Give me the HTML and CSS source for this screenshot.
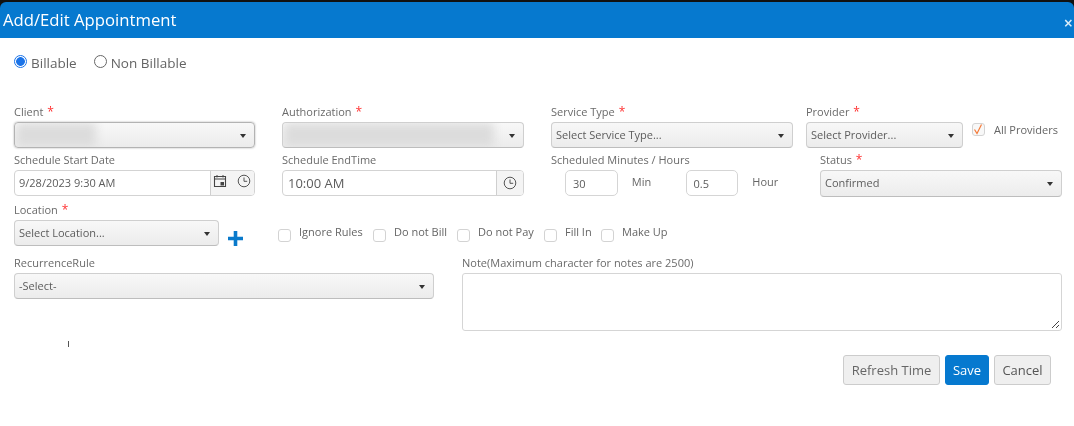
FILE: index.html
```html
<!DOCTYPE html>
<html lang="en">
<head>
<meta charset="utf-8">
<title>Add/Edit Appointment</title>
<link rel="stylesheet" href="styles.css">
</head>
<body>
<div class="soft">
<div class="top">
  <header class="title-bar">
    <h1>Add/Edit Appointment</h1>
    <span class="close">×</span>
  </header>
</div>
<main class="form">
  <div class="radios">
    <label class="radio"><span class="dot on"></span>Billable</label>
    <label class="radio"><span class="dot"></span>Non Billable</label>
  </div>

  <div class="row row-1">
    <div class="field w-client">
      <div class="lab">Client <i>*</i></div>
      <div class="select focus"><span class="blur b-client"></span><b class="caret"></b></div>
    </div>
    <div class="field w-auth">
      <div class="lab">Authorization <i>*</i></div>
      <div class="select"><span class="blur b-auth"></span><b class="caret"></b></div>
    </div>
    <div class="field w-svc">
      <div class="lab">Service Type <i>*</i></div>
      <div class="select"><span>Select Service Type...</span><b class="caret"></b></div>
    </div>
    <div class="field w-prov">
      <div class="lab">Provider <i>*</i></div>
      <div class="select"><span>Select Provider...</span><b class="caret"></b></div>
    </div>
    <div class="all">
      <span class="check checked"><svg viewBox="0 0 12 12" width="12" height="12"><path d="M2.500 6.500 5 10.500 9.500 1.500" fill="none" stroke="#f47b3a" stroke-width="1.200"/></svg></span>
      <span class="all-text">All Providers</span>
    </div>
  </div>

  <div class="row row-2">
    <div class="field w-client">
      <div class="lab">Schedule Start Date</div>
      <div class="input-group">
        <span class="value">9/28/2023 9:30 AM</span>
        <span class="addon two">
          <svg viewBox="0 0 14 14" width="14" height="14"><path d="M1.500 2.500h11v10h-11zM1.500 5h11" fill="none" stroke="#444" stroke-width="1.100"/><path d="M4 1v2.500M10 1v2.500" stroke="#444"/><rect x="7.500" y="8" width="3.500" height="3.500" fill="#444"/></svg>
          <svg viewBox="0 0 14 14" width="14" height="14"><circle cx="7" cy="7" r="5.800" fill="none" stroke="#555"/><path d="M7 3.500V7.300h3.200" fill="none" stroke="#555"/></svg>
        </span>
      </div>
    </div>
    <div class="field w-auth">
      <div class="lab">Schedule EndTime</div>
      <div class="input-group">
        <span class="value big">10:00 AM</span>
        <span class="addon one">
          <svg viewBox="0 0 14 14" width="14" height="14"><circle cx="7" cy="7" r="5.800" fill="none" stroke="#555"/><path d="M7 3.500V7.300h3.200" fill="none" stroke="#555"/></svg>
        </span>
      </div>
    </div>
    <div class="field w-mins">
      <div class="lab">Scheduled Minutes / Hours</div>
      <div class="mins">
        <span class="num">30</span><span class="unit u-min">Min</span>
        <span class="num">0.5</span><span class="unit">Hour</span>
      </div>
    </div>
    <div class="field w-status">
      <div class="lab">Status <i>*</i></div>
      <div class="select tall"><span>Confirmed</span><b class="caret"></b></div>
    </div>
  </div>

  <div class="row row-3">
    <div class="field w-loc">
      <div class="lab">Location <i>*</i></div>
      <div class="select"><span>Select Location...</span><b class="caret"></b></div>
    </div>
    <svg class="plus" viewBox="0 0 15 15" width="15" height="15"><path d="M7.500 0v15M0 7.500h15" stroke="#0a7acb" stroke-width="3.600"/></svg>
    <div class="checks">
      <label class="chk c1"><span class="check"></span><span>Ignore Rules</span></label>
      <label class="chk c2"><span class="check"></span><span>Do not Bill</span></label>
      <label class="chk c3"><span class="check"></span><span>Do not Pay</span></label>
      <label class="chk c4"><span class="check"></span><span>Fill In</span></label>
      <label class="chk c5"><span class="check"></span><span>Make Up</span></label>
    </div>
  </div>

  <div class="row row-4">
    <div class="field w-rec">
      <div class="lab">RecurrenceRule</div>
      <div class="select"><span>-Select-</span><b class="caret"></b></div>
      <div class="tick"></div>
    </div>
    <div class="field w-note">
      <div class="lab">Note(Maximum character for notes are 2500)</div>
      <div class="note">
        <svg class="grip" viewBox="0 0 9 9" width="9" height="9"><path d="M1 8 8 1M5 8 8 5" stroke="#444" stroke-width="1"/></svg>
      </div>
    </div>
  </div>

  <div class="actions">
    <button class="btn b-refresh">Refresh Time</button>
    <button class="btn primary">Save</button>
    <button class="btn b-cancel">Cancel</button>
  </div>
</main>
</div>
</body>
</html>
```
FILE: styles.css
```css
* { box-sizing: border-box; }
html, body { margin: 0; height: 100%; }
body {
  width: 1074px;
  height: 426px;
  overflow: hidden;
  background: #fff;
  font-family: "Open Sans", "Liberation Sans", sans-serif;
  font-size: 11px;
  color: #656565;
}
.soft { filter: blur(0.3px); }
.top { background: #111; padding-top: 2px; height: 38px; }
.title-bar {
  height: 36px;
  background: #0679cf;
  border-radius: 6px 6px 0 0;
  display: flex;
  align-items: center;
  justify-content: space-between;
  padding: 0 1px 0 3px;
  color: #fff;
}
.title-bar h1 { margin: 0; font-size: 16.700px; font-weight: 400; line-height: 36px; }
.close { font-size: 16px; line-height: 12px; margin-top: 6px; color: #dbeefa; font-weight: 600; }
.form { padding: 0 12px 0 14px; }
.radios { display: flex; gap: 17px; height: 50px; padding-top: 17px; font-size: 13.500px; line-height: 16px; }
.radio { display: flex; align-items: flex-start; gap: 4px; color: #646464; }
.dot { width: 13px; height: 13px; border: 1px solid #666; border-radius: 50%; margin-top: 0; background: #fff; }
.dot.on { border: 1px solid #1a73e8; background: radial-gradient(circle, #1a73e8 0 4px, #fff 4.700px); }
.row { display: flex; }
.row-1 { margin-top: 16px; height: 48px; }
.row-2 { margin-top: 0; height: 50px; }
.row-3 { height: 53px; }
.row-4 { height: 84px; }
.field { display: flex; flex-direction: column; flex: none; }
.lab { height: 16px; line-height: 15px; margin-bottom: 2px; white-space: nowrap; color: #6a6a6a; }
.lab i { color: #f33; font-style: normal; font-size: 12px; line-height: 10px; margin-left: 1px; }
.w-client { width: 241px; margin-right: 27px; }
.w-auth { width: 242px; margin-right: 27px; }
.w-svc { width: 242px; margin-right: 13px; }
.w-prov { width: 157px; margin-right: 9px; }
.w-mins { width: 255px; margin-right: 14px; }
.w-status { width: 242px; margin-top: 0; }
.w-loc { width: 205px; margin-right: 9px; }
.w-rec { width: 420px; margin-right: 28px; position: relative; }
.w-note { width: 600px; }
.select {
  height: 26px;
  border: 1px solid #cfcfcf;
  border-bottom-color: #bdbdbd;
  border-radius: 4px;
  background: linear-gradient(#f8f8f8, #ececec);
  display: flex;
  align-items: center;
  justify-content: space-between;
  padding: 0 8px 2px 4px;
  color: #5c5c5c;
  overflow: hidden;
  white-space: nowrap;
}
.select.tall { height: 27px; }
.select.focus { border-color: #b3b3b3; box-shadow: 0 0 2px rgba(0,0,0,.35); }
.caret { width: 0; height: 0; border: 4px solid transparent; border-top: 4px solid #333; border-bottom: 0; border-left-width: 3px; border-right-width: 3px; flex: none; margin-top: 3px; }
.blur { height: 24px; background: #dcdcdc; filter: blur(5px); border-radius: 2px; margin-left: -3px; margin-top: 2px; }
.b-client { width: 80px; }
.b-auth { width: 210px; }
.input-group {
  height: 26px;
  display: flex;
  border: 1px solid #d3d3d3;
  border-radius: 4px;
  overflow: hidden;
}
.value { flex: 1; padding-left: 4px; line-height: 24px; color: #5c5c5c; }
.value.big { font-size: 13px; padding-left: 5px; }
.addon { flex: none; background: #f4f4f4; border-left: 1px solid #cfcfcf; display: flex; align-items: center; }
.addon.two { width: 44px; gap: 10px; padding: 0 3px 5px 2px; }
.addon.one { width: 27px; justify-content: center; }
.mins { display: flex; padding-left: 14px; }
.num { width: 53px; height: 26px; border: 1px solid #d5d5d5; border-radius: 5px; line-height: 25px; padding-left: 7px; color: #5c5c5c; }
.unit { width: 68px; padding-left: 14px; line-height: 23px; color: #666; }
.unit.u-min { width: 68px; }
.all { display: flex; gap: 9px; padding-top: 19px; margin-left: 0; }
.all-text { line-height: 15px; margin-top: -1px; white-space: nowrap; }
.check { display: inline-block; width: 13px; height: 13px; border: 1px solid #d3d3d3; border-radius: 3px; flex: none; background: #fff; }
.check.checked { background: #f8f8f8; padding: 0; line-height: 0; }
.check.checked svg { margin-left: -1px; margin-top: -1px; }
.plus { flex: none; margin-top: 29px; }
.checks { display: flex; padding-left: 35px; padding-top: 25px; }
.chk { display: flex; gap: 8px; line-height: 14px; white-space: nowrap; }
.chk .check { margin-top: 2px; }
.chk span:last-child { margin-top: -2px; }
.c1 { width: 95px; }
.c2 { width: 84px; }
.c3 { width: 87px; }
.c4 { width: 57px; }
.note { position: relative; height: 58px; border: 1px solid #d5d5d5; border-radius: 3px; }
.grip { position: absolute; right: 1px; bottom: 1px; }
.tick { position: absolute; left: 54px; top: 86px; width: 1px; height: 6px; background: #555; }
.actions { display: flex; justify-content: flex-end; gap: 5px; padding-right: 11px; margin-top: 16px; }
.btn {
  font: inherit;
  font-size: 13px;
  height: 30px;
  padding: 0;
  border: 1px solid #ccc;
  border-radius: 3px;
  background: #efefef;
  color: #666;
}
.b-refresh { width: 97px; }
.b-cancel { width: 57px; color: #555; }
.btn.primary { width: 44px; background: #0679cf; border-color: #0679cf; color: #fff; }
```
